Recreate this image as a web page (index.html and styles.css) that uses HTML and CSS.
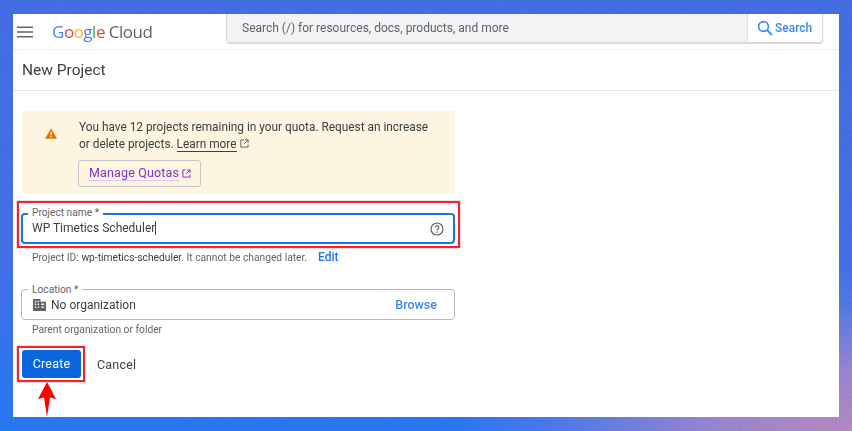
FILE: index.html
```html
<!DOCTYPE html>
<html lang="en">
<head>
<meta charset="utf-8">
<title>New Project</title>
<link rel="stylesheet" href="styles.css">
</head>
<body>
<svg class="noise" width="852" height="431"><filter id="grain"><feTurbulence type="fractalNoise" baseFrequency="0.9" numOctaves="2" seed="4"/><feColorMatrix type="saturate" values="0"/></filter><rect width="852" height="431" filter="url(#grain)"/></svg>
<main class="panel">
  <header class="topbar">
    <svg class="menu-icon" viewBox="0 0 16 12" width="16" height="12"><path d="M0 0.5h16v1.6H0zM0 5.2h16v1.6H0zM0 9.9h16v1.6H0z" fill="#5f6368"/></svg>
    <div class="logo"><span class="g-blue">G</span><span class="g-red">o</span><span class="g-yellow">o</span><span class="g-blue">g</span><span class="g-green">l</span><span class="g-red">e</span> <span class="cloud">Cloud</span></div>
    <div class="searchbar">
      <div class="search-input">Search (/) for resources, docs, products, and more</div>
      <div class="search-btn">
        <svg viewBox="0 0 16 16" width="16" height="16"><circle cx="6.5" cy="6.5" r="4.9" fill="none" stroke="#1a73e8" stroke-width="1.6"/><path d="M10 10l5 5" stroke="#1a73e8" stroke-width="1.8"/></svg>
        <span>Search</span>
      </div>
    </div>
  </header>
  <div class="titlebar">New Project</div>
  <div class="content">
    <section class="banner">
      <svg class="warn" viewBox="0 0 14 12" width="12" height="11"><path d="M7 0L14 12H0z" fill="#e37400"/><path d="M6.3 4h1.4v4H6.3zM6.3 8.9h1.4v1.4H6.3z" fill="#fdf6e0"/></svg>
      <div class="banner-body">
        <p class="banner-text">You have 12 projects remaining in your quota. Request an increase or delete projects. <a class="learn">Learn more</a><svg class="ext" viewBox="0 0 10 10" width="9" height="9"><path d="M4 1H1v8h8V6M5.5 1H9v3.5M9 1L4.5 5.5" fill="none" stroke="#5f6368" stroke-width="1.1"/></svg></p>
        <div class="quota-btn"><a class="quota-link">Manage Quotas</a><svg class="ext" viewBox="0 0 10 10" width="9" height="9"><path d="M4 1H1v8h8V6M5.5 1H9v3.5M9 1L4.5 5.5" fill="none" stroke="#8430ce" stroke-width="1.1"/></svg></div>
      </div>
    </section>
    <div class="field focused">
      <span class="field-label">Project name *</span>
      <span class="field-value">WP Timetics Scheduler<i class="caret"></i></span>
      <svg class="help" viewBox="0 0 14 14" width="14" height="14"><circle cx="7" cy="7" r="6" fill="none" stroke="#5f6368" stroke-width="1.2"/><path d="M5.2 5.5a1.8 1.8 0 1 1 2.7 1.6c-.6.4-.9.7-.9 1.4" fill="none" stroke="#5f6368" stroke-width="1.2"/><path d="M6.4 9.6h1.2v1.2H6.4z" fill="#5f6368"/></svg>
    </div>
    <div class="hint-row">
      <span class="hint">Project ID: <b>wp-timetics-scheduler</b>. It cannot be changed later.</span>
      <a class="edit">Edit</a>
    </div>
    <div class="field location">
      <span class="field-label grey">Location *</span>
      <svg class="org" viewBox="0 0 14 13" width="13" height="12"><path d="M0 0h8v3h6v10H0z" fill="#5f6368"/><path d="M2 2h1.5v1.5H2zM5 2h1.5v1.5H5zM2 5h1.5v1.5H2zM5 5h1.5v1.5H5zM2 8h1.5v1.5H2zM5 8h1.5v1.5H5zM9 5h3v1.5H9zM9 8h3v1.5H9z" fill="#fff"/></svg>
      <span class="field-value">No organization</span>
      <a class="browse">Browse</a>
    </div>
    <div class="hint parent">Parent organization or folder</div>
    <div class="actions">
      <div class="btn-primary">Create</div>
      <div class="btn-text">Cancel</div>
    </div>
  </div>
</main>
<div class="mark mark-name"></div>
<div class="mark mark-create"></div>
<svg class="arrow" viewBox="0 0 18 35" width="18" height="35"><path d="M9 0L18 17L12 15.5L9 35L6 15.5L0 17z" fill="#fd0000"/></svg>
</body>
</html>
```

FILE: styles.css
```css
* { box-sizing: border-box; }
html, body { height: 100%; }
body {
  margin: 0;
  width: 852px;
  height: 431px;
  overflow: hidden;
  position: relative;
  padding: 14px 13px;
  font-family: Roboto, "Liberation Sans", sans-serif;
  color: #3c4043;
  background:
    radial-gradient(ellipse 400px 170px at 100% 100%, #b07fbc 0%, #8f7ccb 35%, rgba(90, 115, 220, .6) 75%, rgba(60, 105, 235, 0) 100%),
    linear-gradient(180deg, #4066e0 0%, #3f67e4 60%, #2470f2 100%);
}
a { text-decoration: none; }
p { margin: 0; }

.noise {
  position: absolute;
  left: 0;
  top: 0;
  opacity: .28;
  mix-blend-mode: overlay;
}

.panel {
  position: relative;
  width: 826px;
  height: 403px;
  background: #fff;
  display: flex;
  flex-direction: column;
  filter: blur(.35px);
}

.topbar {
  height: 36px;
  flex: none;
  display: flex;
  align-items: center;
  border-bottom: 1px solid #f0f1f2;
  padding-left: 4px;
}
.menu-icon { flex: none; }
.logo {
  margin-left: 19px;
  width: 174px;
  font-family: "Open Sans", Roboto, sans-serif;
  font-size: 17px;
  letter-spacing: -0.5px;
  white-space: nowrap;
  flex: none;
}
.g-blue { color: #4285f4; }
.g-red { color: #ea4335; }
.g-yellow { color: #fbbc04; }
.g-green { color: #34a853; }
.cloud { color: #5f6368; }

.searchbar {
  width: 597px;
  height: 29px;
  margin-top: -6px;
  display: flex;
  flex: none;
  border: 1px solid #d5d7da;
  border-top: none;
  border-radius: 0 0 4px 4px;
  box-shadow: 0 1px 1px #d5d7da;
}
.search-input {
  flex: 1;
  background: #f1f3f4;
  color: #5f6368;
  font-size: 12px;
  line-height: 28px;
  padding-left: 15px;
}
.search-btn {
  width: 75px;
  flex: none;
  display: flex;
  align-items: center;
  gap: 2px;
  padding-left: 9px;
  border-left: 1px solid #dadce0;
  color: #1a73e8;
  font-size: 12px;
  font-weight: 500;
  opacity: .85;
}

.titlebar {
  height: 41px;
  flex: none;
  display: flex;
  align-items: center;
  padding-left: 9px;
  font-size: 15.5px;
  border-bottom: 1px solid #e6e7e9;
}

.content {
  padding: 20px 0 0 9px;
  width: 442px;
}

.banner {
  width: 433px;
  height: 83px;
  background: #fdf5df;
  border-radius: 3px;
  display: flex;
  padding: 8px 0 0 23px;
}
.warn { flex: none; margin-top: 9px; }
.banner-body { margin-left: 22px; }
.banner-text {
  width: 355px;
  font-size: 11.85px;
  line-height: 17px;
}
.learn {
  color: #3c4043;
  border-bottom: 1px solid #3c4043;
}
.ext { vertical-align: 0; margin-left: 3px; }
.quota-btn {
  margin-top: 7px;
  margin-left: -1px;
  width: 123px;
  height: 27px;
  border: 1px solid #c4c6c8;
  border-radius: 3px;
  display: flex;
  align-items: center;
  padding-left: 10px;
  font-size: 12.5px;
  letter-spacing: .15px;
}
.quota-link {
  color: #7b35c8;
  border-bottom: 1px solid #e0c8f2;
  line-height: 14px;
}

.field {
  position: relative;
  display: flex;
  align-items: center;
  width: 434px;
  border-radius: 4px;
}
.focused {
  height: 31px;
  margin: 19px 0 0 -1px;
  border: 2px solid #1a73e8;
  padding: 0 9px;
  justify-content: space-between;
}
.focused .field-value { margin-bottom: 2px; }
.location {
  height: 31px;
  margin: 24px 0 0 -1px;
  border: 1px solid #b5b8bc;
  padding: 0 17px 0 11px;
}
.field-label {
  position: absolute;
  left: 5px;
  top: -8px;
  padding: 0 4px;
  background: #fff;
  font-size: 10.2px;
  line-height: 12px;
  color: #5f6368;
}
.grey { left: 6px; top: -6px; }
.field-value {
  font-size: 12px;
  color: #3c4043;
}
.caret {
  display: inline-block;
  width: 1px;
  height: 14px;
  vertical-align: -3px;
  background: #1a4f9c;
}
.org { flex: none; margin-right: 5px; }
.browse {
  margin-left: auto;
  font-size: 12.5px;
  font-weight: 500;
  color: #1a73e8;
  opacity: .85;
}

.hint-row {
  display: flex;
  align-items: center;
  height: 16px;
  margin: 5px 0 0 10px;
}
.hint {
  font-size: 10.25px;
  color: #5f6368;
}
.hint b { font-weight: 400; color: #3c4043; }
.edit {
  margin-left: 11px;
  font-size: 12px;
  font-weight: 500;
  color: #1a73e8;
}
.parent { margin: 3px 0 0 10px; line-height: 14px; }

.actions {
  display: flex;
  align-items: center;
  margin-top: 13px;
}
.btn-primary {
  width: 59px;
  height: 28px;
  background: #0b66db;
  border-radius: 3px;
  color: #fff;
  font-size: 12.5px;
  letter-spacing: .2px;
  text-align: center;
  line-height: 28px;
}
.btn-text {
  margin-left: 16px;
  font-size: 12.5px;
  letter-spacing: .2px;
  color: #3c4043;
}

.mark {
  position: absolute;
  border: 2px solid #f5222d;
  box-shadow: 0 0 1px #f5222d;
}
.mark-name { left: 17px; top: 201px; width: 443px; height: 47px; }
.mark-create { left: 17px; top: 346px; width: 68px; height: 36px; }
.arrow { position: absolute; left: 38px; top: 382px; }
```
